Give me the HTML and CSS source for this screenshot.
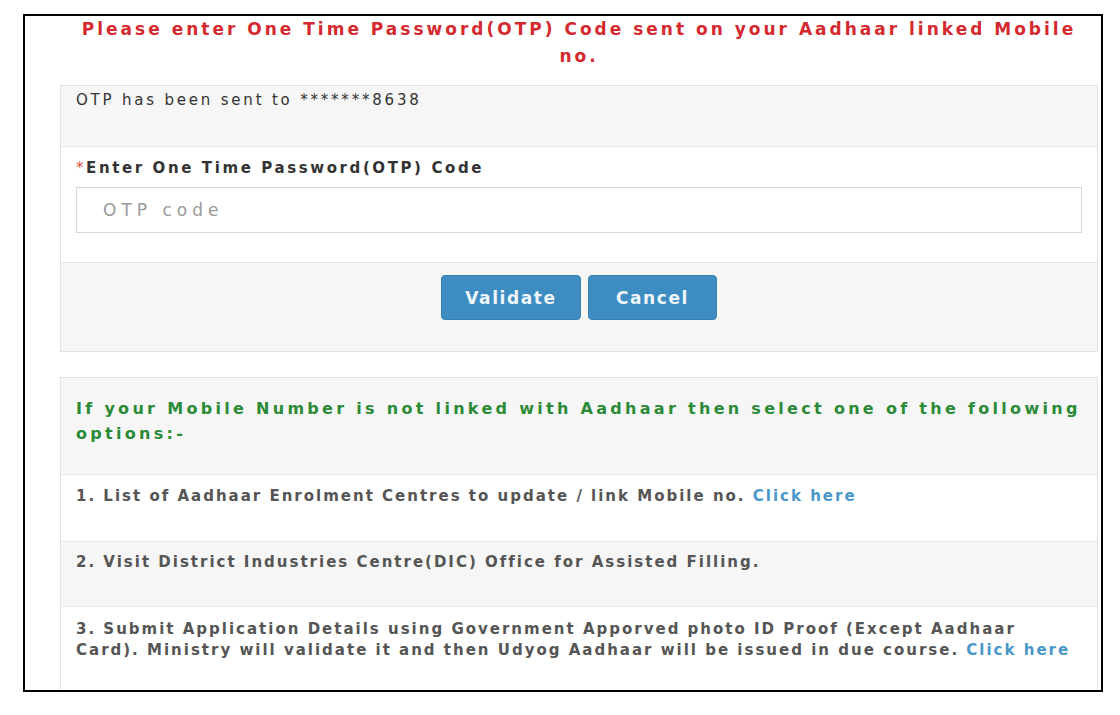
FILE: index.html
```html
<!DOCTYPE html>
<html lang="en">
<head>
    <meta charset="UTF-8">
    <meta name="viewport" content="width=device-width, initial-scale=1.0">
    <title>OTP Verification</title>
    <link rel="stylesheet" href="styles.css">
</head>
<body>
    <div class="frame">
        <h4 class="title">Please enter One Time Password(OTP) Code sent on your Aadhaar linked Mobile<br>no.</h4>

        <div class="panel">
            <div class="row shade sent">OTP has been sent to *******8638</div>
            <div class="row field">
                <label for="otp"><span class="req">*</span>Enter One Time Password(OTP) Code</label>
                <input type="text" id="otp" placeholder="OTP code">
            </div>
            <div class="row shade actions">
                <button class="btn validate">Validate</button>
                <button class="btn cancel">Cancel</button>
            </div>
        </div>

        <div class="panel options">
            <div class="row shade note">If your Mobile Number is not linked with Aadhaar then select one of the following options:-</div>
            <div class="row item first">1. List of Aadhaar Enrolment Centres to update / link Mobile no. <a href="#">Click here</a></div>
            <div class="row shade item second">2. Visit District Industries Centre(DIC) Office for Assisted Filling.</div>
            <div class="row item third">3. Submit Application Details using Government Apporved photo ID Proof (Except Aadhaar Card). Ministry will validate it and then Udyog Aadhaar will be issued in due course. <a href="#">Click here</a></div>
        </div>
    </div>
</body>
</html>
```

FILE: styles.css
```css
body {
    margin: 0;
    background-color: #fff;
    font-family: "DejaVu Sans", Verdana, sans-serif;
    color: #333;
}
.frame {
    margin: 14px 0 0 23px;
    width: 1038px;
    height: 674px;
    border: 2px solid #000;
    padding: 0 3px 0 35px;
    overflow: hidden;
}
.title {
    margin: 0 0 15px 0;
    text-align: center;
    color: #d42a2f;
    font-size: 17px;
    font-weight: bold;
    line-height: 27px;
    letter-spacing: 3px;
}
.panel {
    border: 1px solid #e3e3e3;
}
.options {
    margin-top: 25px;
}
.row {
    padding: 0 15px;
    border-top: 1px solid #e6e6e6;
    font-size: 15px;
    line-height: 21px;
}
.row:first-child {
    border-top: none;
}
.shade {
    background-color: #f6f6f6;
}
.sent {
    padding-top: 4px;
    padding-bottom: 35px;
    color: #333;
    letter-spacing: 2.8px;
}
.field {
    padding-top: 11px;
    padding-bottom: 29px;
}
.field label {
    display: block;
    font-weight: bold;
    color: #333;
    letter-spacing: 2.6px;
    margin-bottom: 8px;
}
.req {
    color: #d9534f;
    font-weight: normal;
}
.field input {
    display: block;
    width: 100%;
    height: 46px;
    box-sizing: border-box;
    border: 1px solid #d9d9d9;
    padding: 0 26px;
    font-family: inherit;
    font-size: 17px;
    letter-spacing: 5px;
    color: #333;
}
.field input::placeholder {
    color: #9a9a9a;
}
.actions {
    display: flex;
    justify-content: center;
    gap: 7px;
    padding-top: 12px;
    padding-bottom: 31px;
}
.btn {
    height: 45px;
    border: 1px solid #3580b0;
    border-radius: 4px;
    background-color: #3d8dc2;
    color: #eef6fc;
    font-family: inherit;
    font-size: 17px;
    font-weight: bold;
    letter-spacing: 1.6px;
    cursor: pointer;
}
.validate {
    width: 140px;
}
.cancel {
    width: 129px;
}
.note {
    padding-top: 18px;
    padding-bottom: 28px;
    color: #2b8a36;
    font-weight: bold;
    font-size: 16px;
    line-height: 25px;
    letter-spacing: 3.3px;
}
.item {
    color: #555;
    font-weight: bold;
    letter-spacing: 2px;
}
.item a {
    color: #4a98c9;
    text-decoration: none;
}
.first {
    padding-top: 11px;
    padding-bottom: 34px;
}
.second {
    padding-top: 10px;
    padding-bottom: 33px;
}
.third {
    padding-top: 12px;
    padding-bottom: 40px;
}
```
